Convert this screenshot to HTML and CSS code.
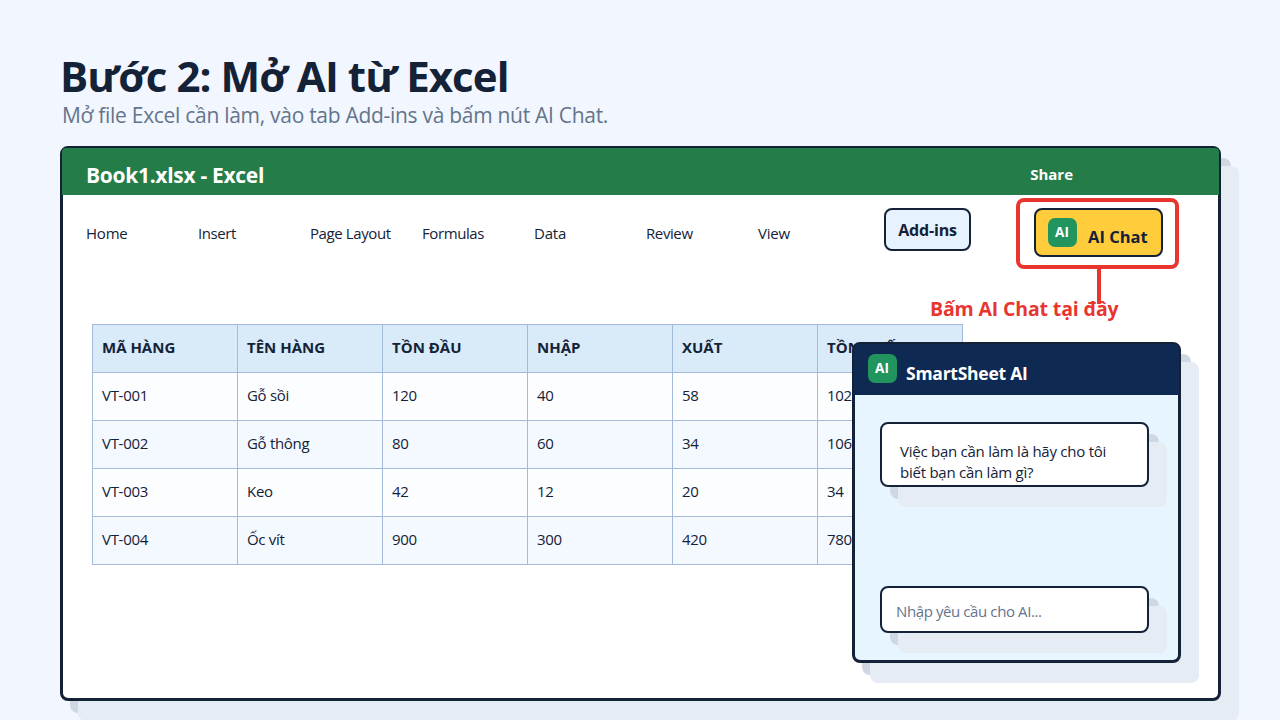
FILE: index.html
```
<!DOCTYPE html>
<html lang="vi">
<head>
  <meta charset="UTF-8">
  <meta name="viewport" content="width=device-width, initial-scale=1.0">
  <title>Bước 2: Mở AI từ Excel</title>
  <link rel="stylesheet" href="styles.css">
</head>

<body>
  <header class="slide-header">
    <h1>Bước 2: Mở AI từ Excel</h1>
    <p>Mở file Excel cần làm, vào tab Add-ins và bấm nút AI Chat.</p>
  </header>

  <main class="window">
    <div class="titlebar">
      <span class="file-name">Book1.xlsx - Excel</span>
      <span class="share">Share</span>
    </div>

    <!-- Ribbon -->
    <div class="ribbon">
      <nav class="tabs">
        <span>Home</span>
        <span class="tight">Insert</span>
        <span class="tight">Page Layout</span>
        <span class="tight">Formulas</span>
        <span>Data</span>
        <span class="tight">Review</span>
        <span>View</span>
      </nav>
      <button class="addins">Add-ins</button>
      <div class="ai-chat">
        <button class="ai-button">
          <span class="badge">AI</span>
          <span class="ai-label">AI Chat</span>
        </button>
        <div class="ring"></div>
        <div class="pointer"></div>
        <div class="callout">Bấm AI Chat tại đây</div>
      </div>
    </div>

    <!-- Sheet -->
    <table class="sheet">
      <thead>
        <tr><th>MÃ HÀNG</th><th>TÊN HÀNG</th><th>TỒN ĐẦU</th><th>NHẬP</th><th>XUẤT</th><th>TỒN CUỐI</th></tr>
      </thead>
      <tbody>
        <tr><td>VT-001</td><td>Gỗ sồi</td><td>120</td><td>40</td><td>58</td><td>102</td></tr>
        <tr><td>VT-002</td><td>Gỗ thông</td><td>80</td><td>60</td><td>34</td><td>106</td></tr>
        <tr><td>VT-003</td><td>Keo</td><td>42</td><td>12</td><td>20</td><td>34</td></tr>
        <tr><td>VT-004</td><td>Ốc vít</td><td>900</td><td>300</td><td>420</td><td>780</td></tr>
      </tbody>
    </table>

    <!-- Chat panel floats over the sheet -->
    <aside class="panel">
      <div class="panel-header">
        <span class="badge">AI</span>
        <span class="panel-title">SmartSheet AI</span>
      </div>
      <div class="panel-body">
        <div class="bubble">Việc bạn cần làm là hãy cho tôi<br>biết bạn cần làm gì?</div>
        <div class="prompt">Nhập yêu cầu cho AI...</div>
      </div>
    </aside>
  </main>
</body>

</html>
```
FILE: styles.css
```
* {
  box-sizing: border-box;
}

body {
  margin: 0;
  width: 1280px;
  height: 720px;
  overflow: hidden;
  background-color: #f2f6fe;
  color: #142238;
  font-family: "Open Sans", "Noto Sans", sans-serif;
  font-size: 15px;
}

button {
  font-family: inherit;
  color: inherit;
  padding: 0;
}

.slide-header {
  padding: 51px 0 0 60px;
}

h1 {
  margin: 0;
  font-size: 42px;
  line-height: 50px;
  letter-spacing: -0.93px;
}

.slide-header p {
  margin: 0 0 17px 2px;
  color: #64748b;
  font-size: 21px;
  line-height: 28px;
  letter-spacing: -0.29px;
}

.window {
  position: relative;
  width: 1161px;
  height: 555px;
  margin-left: 60px;
  border: 3px solid #142238;
  border-radius: 8px;
  background-color: #fff;
  box-shadow: 18px 20px 0 #e5ecf4, 10px 12px 0 #cfd8e2;
}

.titlebar {
  display: flex;
  justify-content: space-between;
  height: 47px;
  margin: -1px -1px 0;
  padding: 7px 146px 0 24px;
  border-radius: 4px 4px 0 0;
  background-color: #247c48;
  color: #fff;
  font-weight: 700;
  line-height: 40px;
}

.file-name {
  font-size: 21px;
  letter-spacing: -0.3px;
}

.share {
  line-height: 38px;
}

.ribbon {
  display: flex;
  align-items: flex-start;
  height: 129px;
  padding: 13px 0 0 23px;
}

.tabs {
  display: flex;
  width: 798px;
  line-height: 50px;
  letter-spacing: -0.2px;
}

.tabs span {
  width: 112px;
}

.tabs .tight {
  letter-spacing: -0.4px;
}

.addins {
  width: 87px;
  height: 43px;
  border: 2px solid #142238;
  border-radius: 8px;
  background-color: #e7f2ff;
  font-size: 16px;
  font-weight: 700;
  letter-spacing: -0.15px;
}

.ai-chat {
  position: relative;
  margin-left: 63px;
}

.ai-button {
  display: flex;
  width: 129px;
  height: 49px;
  padding: 8px 12px;
  gap: 11px;
  border: 2px solid #142238;
  border-radius: 8px;
  background-color: #ffcd3c;
}

.badge {
  width: 29px;
  height: 29px;
  padding-right: 1px;
  border-radius: 7px;
  background-color: #22955f;
  color: #fff;
  font-size: 13.5px;
  font-weight: 700;
  line-height: 29px;
  text-align: center;
}

.ai-label {
  padding-top: 8px;
  font-size: 16.5px;
  font-weight: 700;
  line-height: 21px;
}

.ring {
  position: absolute;
  inset: -10px -16px -12px -18px;
  border: 4px solid #e8362f;
  border-radius: 8px;
}

.pointer {
  position: absolute;
  left: 63px;
  top: 61px;
  width: 4px;
  height: 35px;
  background-color: #e8362f;
}

.callout {
  position: absolute;
  left: -104px;
  top: 87px;
  color: #e8362f;
  font-size: 19.5px;
  font-weight: 700;
  line-height: 28px;
  letter-spacing: -0.15px;
  white-space: nowrap;
}

/* Spreadsheet */
.sheet {
  width: 871px;
  margin-left: 29px;
  border-collapse: collapse;
  table-layout: fixed;
}

.sheet th,
.sheet td {
  height: 48px;
  padding: 0 0 4px 9px;
  border: 1px solid #a4badb;
  text-align: left;
  line-height: 20px;
}

.sheet td {
  letter-spacing: -0.3px;
}

.sheet th {
  background-color: #d9eaf8;
}

.sheet tbody tr {
  background-color: #fcfdff;
}

.sheet tbody tr:nth-child(even) {
  background-color: #f3f9fe;
}

/* Chat panel */
.panel {
  position: absolute;
  left: 789px;
  top: 193px;
  width: 329px;
  height: 321px;
  border: 3px solid #142238;
  border-radius: 8px;
  background-color: #e6f5ff;
  box-shadow: 18px 20px 0 #e5ecf4, 10px 12px 0 #cfd8e2;
}

.panel-header {
  display: flex;
  gap: 9px;
  height: 51px;
  margin: -1px -1px 0;
  padding: 10px 14px 0;
  border-radius: 6px 6px 0 0;
  background-color: #0e2a52;
}

.panel-title {
  padding-top: 5px;
  color: #fff;
  font-size: 17.5px;
  font-weight: 700;
  line-height: 29px;
  letter-spacing: -0.25px;
}

.panel-body {
  display: flex;
  flex-direction: column;
  justify-content: space-between;
  height: 265px;
  padding: 27px 0 27px 25px;
}

.bubble,
.prompt {
  width: 269px;
  border: 2px solid #142238;
  border-radius: 8px;
  background-color: #fff;
  box-shadow: 18px 20px 0 #e5ecf4, 10px 12px 0 #cfd8e2;
}

.bubble {
  height: 65px;
  padding: 17px 0 0 18px;
  line-height: 21px;
  letter-spacing: -0.25px;
}

.prompt {
  height: 47px;
  padding: 2px 0 0 14px;
  color: #64748b;
  line-height: 43px;
  letter-spacing: -0.4px;
}
```
